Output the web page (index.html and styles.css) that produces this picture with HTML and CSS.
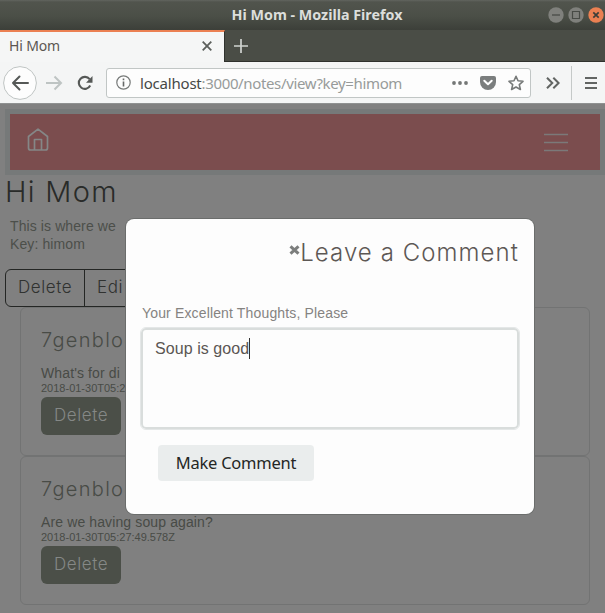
FILE: index.html
```html
<!DOCTYPE html>
<html lang="en">
<head>
<meta charset="utf-8">
<title>Hi Mom</title>
<link rel="stylesheet" href="styles.css">
</head>
<body>
<div class="window">
  <header class="titlebar">
    <span class="window-title">Hi Mom - Mozilla Firefox</span>
    <div class="window-buttons">
      <svg width="16" height="16" viewBox="0 0 16 16"><circle cx="8" cy="8" r="7.7" fill="#7f807c"/><path d="M4 8h8" stroke="#484b46" stroke-width="1.3"/></svg>
      <svg width="16" height="16" viewBox="0 0 16 16"><circle cx="8" cy="8" r="7.7" fill="#7f807c"/><path d="M4.5 4.5h7v7h-7z" fill="none" stroke="#484b46" stroke-width="1.2"/></svg>
      <svg width="16" height="16" viewBox="0 0 16 16"><circle cx="8" cy="8" r="7.7" fill="#eb8052"/><path d="M5.3 5.3l5.4 5.4M10.7 5.3l-5.4 5.4" stroke="#3c3e39" stroke-width="1.7"/></svg>
    </div>
  </header>
  <div class="tabs">
    <div class="tab"><span>Hi Mom</span>
      <svg width="10" height="10" viewBox="0 0 10 10"><path d="M.7.7l8.6 8.6M9.300.7L.7 9.300" stroke="#5c5f5c" stroke-width="1.8"/></svg>
    </div>
    <svg class="new-tab" width="14" height="14" viewBox="0 0 14 14"><path d="M7 0v14M0 7h14" stroke="#d0d3d0" stroke-width="1.7"/></svg>
  </div>
  <nav class="toolbar">
    <svg class="back" width="34" height="34" viewBox="0 0 34 34"><circle cx="17" cy="17" r="16.400" fill="#fdfdfd" stroke="#bfc4c3"/><path d="M25 17H10M16.500 10.500L10 17l6.500 6.500" fill="none" stroke="#555856" stroke-width="2" stroke-linecap="round" stroke-linejoin="round"/></svg>
    <svg class="forward" width="18" height="16" viewBox="0 0 18 16"><path d="M1 8h15M9.500 1.500L16 8l-6.500 6.500" fill="none" stroke="#bec4c3" stroke-width="2"/></svg>
    <svg class="reload" width="16" height="16" viewBox="0 0 16 16"><path d="M13.200 10.500A6 6 0 1 1 12.600 4.200" fill="none" stroke="#555856" stroke-width="2.100"/><path d="M15.500 1v6.700H9z" fill="#555856"/></svg>
    <div class="address">
      <svg class="info" width="15" height="15" viewBox="0 0 15 15"><circle cx="7.500" cy="7.500" r="6.700" fill="none" stroke="#777a79" stroke-width="1.200"/><path d="M7.500 6.500v5M7.500 3.500v1.700" stroke="#666968" stroke-width="1.600"/></svg>
      <span class="url"><b>localhost</b>:3000/notes/view?key=himom</span>
      <svg class="dots" width="16" height="4" viewBox="0 0 16 4"><g fill="#747776"><circle cx="2" cy="2" r="1.900"/><circle cx="8" cy="2" r="1.900"/><circle cx="14" cy="2" r="1.900"/></g></svg>
      <svg class="pocket" width="16" height="14" viewBox="0 0 16 14"><path d="M2 0h12q2 0 2 2v4a8 8 0 0 1-16 0V2q0-2 2-2z" fill="#7b7e7e"/><path d="M4.300 4.700L8 8.300l3.700-3.600" fill="none" stroke="#fff" stroke-width="2" stroke-linecap="round" stroke-linejoin="round"/></svg>
      <svg width="16" height="16" viewBox="0 0 16 16"><path d="M8 1.300l2 4.500 5 .5-3.700 3.300 1.100 4.900L8 12l-4.400 2.500 1.100-4.900L1 6.300l5-.5z" fill="none" stroke="#777a79" stroke-width="1.600" stroke-linejoin="round"/></svg>
    </div>
    <svg class="more" width="14" height="12" viewBox="0 0 14 12"><path d="M1 .7L6.300 6 1 11.300M7.300.7L12.600 6l-5.300 5.300" fill="none" stroke="#626563" stroke-width="2"/></svg>
    <div class="menu"><svg width="12" height="12" viewBox="0 0 12 12"><path d="M0 1h12M0 6h12M0 11h12" stroke="#626563" stroke-width="2"/></svg></div>
  </nav>
  <main class="page">
    <div class="navbar">
      <svg width="22" height="24" viewBox="0 0 22 24"><path d="M1.500 8.500L11 1.200l9.500 7.300V20q0 2-2 2h-15q-2 0-2-2zM7.500 21.500V11.500h7v10" fill="none" stroke="#858787" stroke-width="1.700" stroke-linejoin="round"/></svg>
      <svg width="24" height="19" viewBox="0 0 24 19"><path d="M0 1.500h24M0 9.500h24M0 17.500h24" stroke="#7b7979" stroke-width="1.500"/></svg>
    </div>
    <h1>Hi Mom</h1>
    <p class="summary">This is where we<br>Key: himom</p>
    <div class="actions"><span>Delete</span><span>Edi</span></div>
    <section class="card">
      <h2>7genblog</h2>
      <p>What's for di</p>
      <time>2018-01-30T05:27</time>
      <span class="delete">Delete</span>
    </section>
    <section class="card">
      <h2>7genblog</h2>
      <p>Are we having soup again?</p>
      <time>2018-01-30T05:27:49.578Z</time>
      <span class="delete">Delete</span>
    </section>
  </main>
  <div class="modal">
    <div class="modal-title">
      <svg width="11" height="10" viewBox="0 0 11 10"><path d="M1.500 1.300l8 7.400M9.500 1.300l-8 7.400" stroke="#7c7e7d" stroke-width="3"/></svg>
      <h3>Leave a Comment</h3>
    </div>
    <div class="label">Your Excellent Thoughts, Please</div>
    <div class="input"><span>Soup is good</span><i></i></div>
    <div class="submit"><span>Make Comment</span></div>
  </div>
</div>
</body>
</html>
```
FILE: styles.css
```css
* { box-sizing: border-box; }
body, h1, h2, h3, p { margin: 0; }
body { width: 605px; height: 613px; overflow: hidden; font-family: "Liberation Sans", sans-serif; }
svg { display: block; flex: none; }
.window { position: relative; width: 605px; height: 613px; overflow: hidden; display: flex; flex-direction: column; background: #808080; }

.titlebar { height: 30px; flex: none; display: grid; grid-template-columns: 57px 1fr 57px; align-items: center; background: linear-gradient(#62655f 0, #51544d 2px, #4b4f47 16px, #3c3f39 30px); }
.window-title { grid-column: 2; margin-left: 29px; justify-self: center; color: #dcdedb; font: bold 14.300px/20px "Noto Sans", sans-serif; white-space: nowrap; }
.window-buttons { display: flex; gap: 4px; }

.tabs { height: 32px; flex: none; display: flex; align-items: center; background: #4a4d46; border-bottom: 1px solid #2f312d; }
.tab { width: 225px; height: 32px; align-self: flex-start; display: flex; align-items: center; justify-content: space-between; padding: 0 12px 2px 9px; border-top: 2px solid #eb8052; border-right: 1px solid #30322e; background: #f5f6f6; color: #5c5653; font: 14px/20px "Noto Sans", sans-serif; letter-spacing: -.15px; }
.new-tab { margin-left: 9px; }

.toolbar { height: 42px; flex: none; display: flex; align-items: center; padding-left: 3px; background: #f4f5f5; border-bottom: 1px solid #8f9191; }
.forward { margin-left: 8px; }
.reload { margin-left: 14px; }
.address { width: 425px; height: 30px; margin-left: 13px; padding: 0 6px 0 9px; display: flex; align-items: center; background: #fdfdfd; border: 1px solid #c1c6c5; border-radius: 3px; }
.url { margin-left: 9px; flex: 1; color: #979b9a; font: 15px/20px "Noto Sans", sans-serif; letter-spacing: -.36px; white-space: nowrap; }
.url b { color: #454846; font-weight: 400; letter-spacing: -.2px; }
.pocket { margin: 0 12px; }
.more { margin-left: 15px; }
.menu { height: 34px; margin-left: 11px; padding-left: 13px; display: flex; align-items: center; border-left: 1px solid #c5c9c8; }

.page { flex: 1; padding: 5px 0 0 5px; display: flex; flex-direction: column; background: #808080; }
.navbar { height: 66px; flex: none; display: flex; align-items: center; justify-content: space-between; padding: 0 32px 0 17px; background: #7b4d4e; border: 5px solid #767979; }
.navbar svg:first-child { margin-top: -4px; }
h1 { height: 35px; margin: 0; color: #292b29; font: 300 29px/34px Inter, sans-serif; letter-spacing: 1.3px; }
.summary { height: 36px; margin: 7px 0 0 5px; color: #4c4f4a; font-size: 14px; line-height: 18px; letter-spacing: .1px; white-space: nowrap; }
.actions { height: 38px; width: 160px; margin-top: 16px; display: flex; border: 1px solid #242624; border-radius: 6px; color: #303230; font: 300 17px/34px Inter, sans-serif; letter-spacing: .6px; }
.actions span { padding: 0 12px; }
.actions span:first-child { width: 79px; border-right: 1px solid #242624; }
.card { width: 570px; height: 149px; flex: none; margin-left: 15px; padding: 20px; border: 1px solid #727373; border-radius: 6px; color: #484b46; white-space: nowrap; }
.card h2 { font: 300 20px/24px Inter, sans-serif; letter-spacing: 1.3px; }
.card p { margin-top: 12px; font-size: 14px; line-height: 18px; letter-spacing: .12px; }
.card time { display: block; font-size: 11px; line-height: 13px; }
.delete { display: block; width: 80px; height: 38px; margin-top: 2px; padding-left: 13px; border-radius: 6px; background: #4b4f48; color: #858886; font: 300 17px/37px Inter, sans-serif; letter-spacing: .6px; }

.modal { position: absolute; left: 126px; top: 219px; width: 408px; height: 295px; padding: 17px 15px; background: #fdfdfd; border-radius: 8px; box-shadow: 0 0 0 1px #6b6d6c; }
.modal-title { height: 32px; display: flex; justify-content: flex-end; }
.modal-title svg { margin: 9px 0 0 0; }
.modal-title h3 { color: #5d5855; font: 300 24px/34px Inter, sans-serif; letter-spacing: 1.07px; white-space: nowrap; }
.label { margin: 36px 0 0 1px; color: #858381; font-size: 14px; line-height: 18px; letter-spacing: .15px; }
.input { width: 378px; height: 101px; margin-top: 6px; padding: 8px 12px; display: flex; border: 2px solid #d9dddc; outline: 1px solid #e4e7e7; border-radius: 5px; color: #5b5653; font-size: 16px; line-height: 21px; letter-spacing: .07px; }
.input i { width: 1px; height: 21px; background: #333; }
.submit { width: 156px; height: 36px; margin: 16px 0 0 17px; display: flex; justify-content: center; align-items: center; border-radius: 4px; background: #eaeded; color: #242624; font: 16.500px/24px "Noto Sans", sans-serif; letter-spacing: -.25px; white-space: nowrap; }
```
